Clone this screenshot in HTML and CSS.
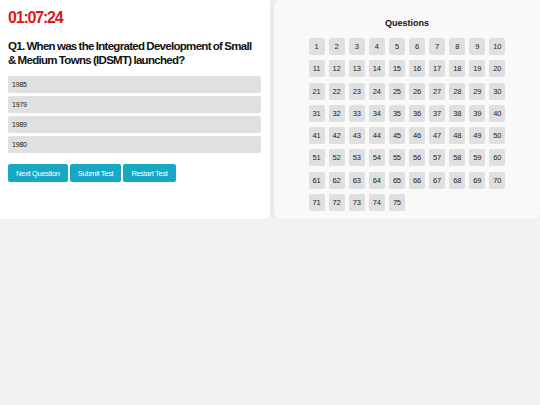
FILE: index.html
```html
<!DOCTYPE html>
<html lang="en">
<head>
  <meta charset="UTF-8">
  <meta name="viewport" content="width=device-width, initial-scale=1.0">
  <title>Quiz</title>
  <link rel="stylesheet" href="styles.css">
</head>
<body>
  <div class="quiz">
    <div class="timer">01:07:24</div>

    <h2 class="pergunta">Q1. When was the Integrated Development of Small &amp; Medium Towns (IDSMT) launched?</h2>

    <div class="opcoes">
      <div class="opcao">1985</div>
      <div class="opcao">1979</div>
      <div class="opcao">1989</div>
      <div class="opcao">1980</div>
    </div>

    <div class="botoes">
      <button>Next Question</button>
      <button>Submit Test</button>
      <button>Restart Test</button>
    </div>
  </div>

  <div class="painel">
    <h3>Questions</h3>
    <div class="grade"></div>
  </div>

  <script>
    const grade = document.querySelector(".grade");
    for (let i = 1; i <= 75; i = i + 1) {
      grade.innerHTML = grade.innerHTML + '<div class="numero">' + i + '</div>';
    }
  </script>
</body>
</html>
```

FILE: styles.css
```css
body {
  background: #f2f2f2;
  margin: 0;
  display: flex;
  align-items: flex-start;
  gap: 4px;
  font-family: "Liberation Sans", Arial, sans-serif;
}

.quiz {
  background: #ffffff;
  width: 270px;
  height: 219px;
  box-sizing: border-box;
  padding: 10px 9px 0 8px;
  border-radius: 0 0 6px 0;
  box-shadow: 0 0 4px rgba(0, 0, 0, 0.08);
}

.timer {
  color: #e0181b;
  font-size: 16px;
  line-height: 16px;
  letter-spacing: -1.2px;
  font-weight: bold;
}

.pergunta {
  font-size: 11.5px;
  line-height: 14px;
  letter-spacing: -0.7px;
  word-spacing: -0.5px;
  margin: 13px 0 9px 0;
  color: #111;
}

.opcoes {
  display: flex;
  flex-direction: column;
  gap: 3px;
}

.opcao {
  background: #e0e0e0;
  border-radius: 2px;
  height: 17px;
  line-height: 17px;
  padding-left: 4px;
  font-size: 7px;
  letter-spacing: -0.2px;
  color: #222;
}

.botoes {
  display: flex;
  gap: 2px;
  margin-top: 11px;
}

button {
  background: #17a9c3;
  color: #ffffff;
  border: 0;
  border-radius: 2px;
  height: 18px;
  padding: 0 8px;
  font-size: 7.5px;
  letter-spacing: -0.3px;
  font-family: "Liberation Sans", Arial, sans-serif;
}

.painel {
  background: #f9f9f9;
  width: 266px;
  height: 219px;
  box-sizing: border-box;
  border-radius: 6px 0 6px 6px;
  box-shadow: 0 0 4px rgba(0, 0, 0, 0.08);
  display: flex;
  flex-direction: column;
  align-items: center;
}

.painel h3 {
  font-size: 9px;
  margin: 18px 0 10px 0;
  color: #111;
}

.grade {
  display: grid;
  grid-template-columns: repeat(10, 16px);
  column-gap: 4.1px;
  row-gap: 5.3px;
  width: 197px;
}

.numero {
  background: #e0e0e0;
  border-radius: 2px;
  height: 17px;
  line-height: 17px;
  text-align: center;
  font-size: 7.5px;
  letter-spacing: -0.2px;
  color: #222;
}
```
